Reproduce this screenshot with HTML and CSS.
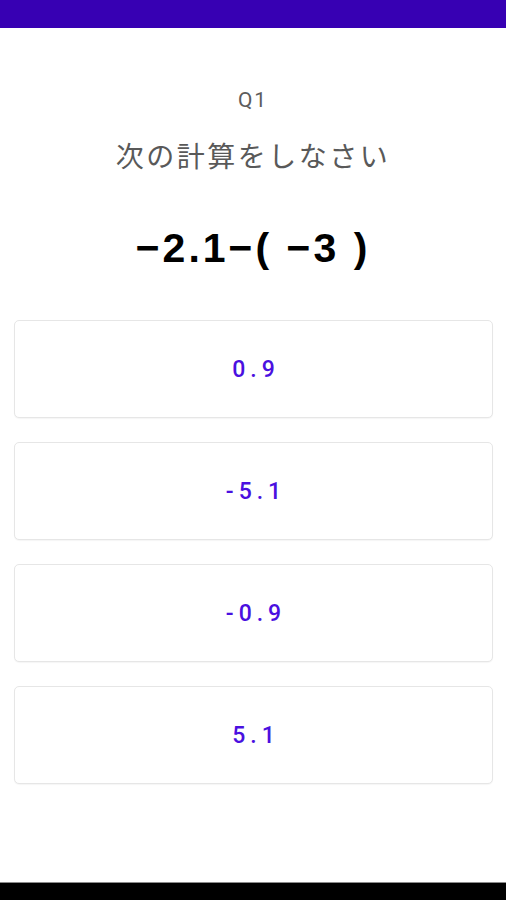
FILE: index.html
```html
<!DOCTYPE html>
<html lang="ja">
<head>
<meta charset="utf-8">
<title>Q1</title>
<link rel="stylesheet" href="styles.css">
</head>
<body>
<div class="screen">
  <div class="appbar"></div>
  <main class="content">
    <div class="qnum">Q1</div>
    <div class="prompt">次の計算をしなさい</div>
    <div class="expr">−2.1−( −3 )</div>
    <div class="choices">
      <button class="choice">0.9</button>
      <button class="choice">-5.1</button>
      <button class="choice">-0.9</button>
      <button class="choice">5.1</button>
    </div>
  </main>
  <div class="navbar"></div>
</div>
</body>
</html>
```
FILE: styles.css
```css
html, body {
  margin: 0;
  padding: 0;
  background: #ffffff;
}

.screen {
  display: flex;
  flex-direction: column;
  min-height: 100vh;
  font-family: "Roboto", "Noto Sans CJK JP", sans-serif;
}

.appbar {
  height: 28px;
  background: #3700b3;
  flex: none;
}

.content {
  flex: 1;
  display: flex;
  flex-direction: column;
  align-items: stretch;
}

.qnum {
  margin-top: 60px;
  height: 24px;
  line-height: 24px;
  text-align: center;
  font-size: 21px;
  letter-spacing: 2px;
  color: #5c5c5c;
}

.prompt {
  margin-top: 25px;
  height: 36px;
  line-height: 36px;
  text-align: center;
  font-family: "Noto Sans CJK JP", sans-serif;
  font-size: 28px;
  letter-spacing: 2.5px;
  color: #595959;
}

.expr {
  margin-top: 50px;
  height: 50px;
  line-height: 50px;
  text-align: center;
  font-family: "Liberation Sans", "Noto Sans CJK JP", sans-serif;
  font-weight: bold;
  font-size: 41px;
  letter-spacing: 3px;
  color: #000000;
}

.choices {
  margin: 47px 13px 0 14px;
  display: flex;
  flex-direction: column;
  gap: 24px;
}

.choice {
  height: 98px;
  box-sizing: border-box;
  background: #ffffff;
  border: 1px solid #e6e6e6;
  border-radius: 5px;
  box-shadow: 0 1px 1px rgba(0, 0, 0, 0.04);
  font-family: "Roboto", sans-serif;
  font-weight: 500;
  font-size: 23px;
  letter-spacing: 5px;
  color: #4a10e0;
  padding: 0 0 0 5px;
  cursor: pointer;
}

.navbar {
  flex: none;
  height: 17px;
  background: #000000;
  border-top: 1px solid #8a8a8a;
}
```
